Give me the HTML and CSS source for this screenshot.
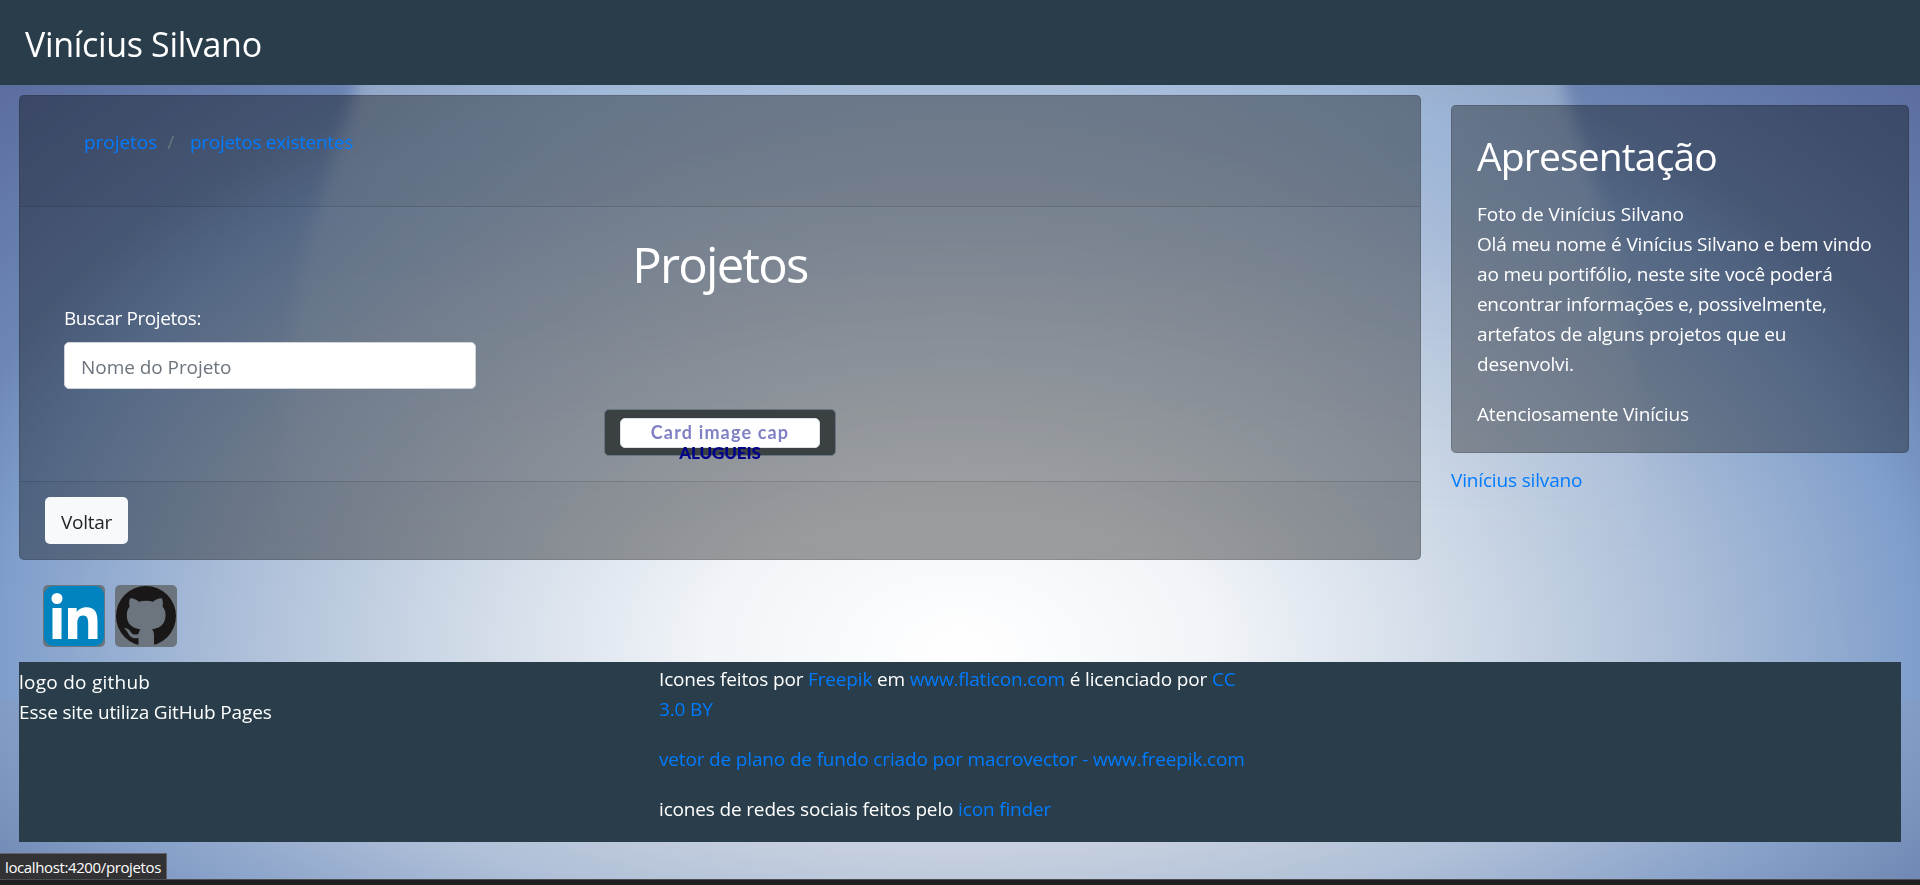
FILE: index.html
```html
<!DOCTYPE html>
<html lang="pt-BR">
<head>
<meta charset="utf-8">
<title>Vinícius Silvano</title>
<link rel="stylesheet" href="styles.css">
</head>
<body>
<svg class="backdrop" viewBox="0 0 1920 885" preserveAspectRatio="none" aria-hidden="true">
  <defs>
    <linearGradient id="beam" x1="0" y1="80" x2="0" y2="560" gradientUnits="userSpaceOnUse">
      <stop offset="0" stop-color="#dfe8f0" stop-opacity=".36"/>
      <stop offset=".35" stop-color="#dfe8f0" stop-opacity=".17"/>
      <stop offset="1" stop-color="#dfe8f0" stop-opacity="0"/>
    </linearGradient>
    <filter id="soft" x="-10%" y="-10%" width="120%" height="120%"><feGaussianBlur stdDeviation="8"/></filter>
  </defs>
  <path d="M368 40C345 150 296 220 284 400L270 600H1650L1636 400C1624 220 1575 150 1552 40Z" fill="url(#beam)" filter="url(#soft)"/>
</svg>
<header class="topbar"><a class="brand">Vinícius Silvano</a></header>
<div class="columns">
  <main class="card panel">
    <div class="card-header">
      <nav class="breadcrumb"><a>projetos</a><span class="slash">/</span><a class="current">projetos existentes</a></nav>
    </div>
    <div class="card-body">
      <h1>Projetos</h1>
      <div class="search">
        <label for="q">Buscar Projetos:</label>
        <input id="q" type="text" placeholder="Nome do Projeto">
      </div>
      <div class="project">
        <div class="thumb">Card image cap</div>
        <div class="project-name">ALUGUEIS</div>
      </div>
    </div>
    <div class="card-footer"><button class="back">Voltar</button></div>
  </main>
  <aside>
    <section class="card intro">
      <h2>Apresentação</h2>
      <p><span class="loose">Foto de Vinícius Silvano</span><br>Olá meu nome é Vinícius Silvano e bem vindo<br>ao meu portifólio, neste site você poderá<br><span class="snug">encontrar informações e, possivelmente,</span><br>artefatos de alguns projetos que eu<br>desenvolvi.</p>
      <p>Atenciosamente Vinícius</p>
    </section>
    <a class="author">Vinícius silvano</a>
  </aside>
</div>
<div class="social">
  <a class="badge"><svg viewBox="0 0 60 60"><rect width="60" height="60" rx="9" fill="#0083be"/><circle cx="13" cy="12.500" r="5.500" fill="#fff"/><path d="M8.500 22h9v31h-9zM24 22h8.700v4.300c1.500-2.800 5-5.100 9.700-5.100 8.600 0 11.100 5.500 11.100 14V53h-9.300V37.500c0-4.700-1-8-5-8-4.500 0-5.900 3.300-5.900 8V53H24z" fill="#fff"/></svg></a>
  <a class="badge"><svg viewBox="0 0 60 60"><circle cx="30" cy="30" r="30" fill="#191717"/><path fill="#6c757d" d="M14 12.500c2.500-.6 6 1 9 3.200 4.500-1.200 9.500-1.200 14 0 3-2.200 6.500-3.800 9-3.200 1.200 3 1 6 .5 8 2 2.400 3 5 3 8.500 0 10-6 13.200-13.500 14.200 1.500 1.500 2 3.500 2 6V60H22.500V52c-6 1-8.700-1-10.500-5-.9-2-2-3-4-4.500 3-.7 5 1 6.500 3.200 2 3 4.500 3.300 8 2.200.3-2 1-3.500 2-4.500C16.500 42.200 10.800 38.500 10.800 29c0-3.500 1-6.100 2.900-8.500-.7-2-.8-5 .3-8z"/></svg></a>
</div>
<footer class="credits">
  <div class="hosting"><span class="wide">logo do github</span><br>Esse site utiliza GitHub Pages</div>
  <div class="licenses">
    <p>Icones feitos por <a>Freepik</a> em <a>www.flaticon.com</a> é licenciado por <a>CC<br>3.0 BY</a></p>
    <p><a>vetor de plano de fundo criado por macrovector - www.freepik.com</a></p>
    <p>icones de redes sociais feitos pelo <a>icon finder</a></p>
  </div>
</footer>
<div class="status">localhost:4200/projetos</div>
<div class="edge"></div>
</body>
</html>
```

FILE: styles.css
```css
* { box-sizing: border-box; }
html, body { height: 100%; }
body {
  margin: 0;
  overflow: hidden;
  font: 19px/30px "Open Sans", "Noto Sans", sans-serif;
  letter-spacing: -.16px;
  color: #fff;
  background:
    radial-gradient(ellipse 980px 620px at 50% 650px, #fff 0, #f1f4f8 26%, #cdd8e6 53%, #a9bcd7 76%, #7f9ecb 98%, #6c86b3 108%, #5b6d9e 134%) 0 0 / 100% 700px no-repeat,
    radial-gradient(ellipse 960px 400px at 50% -50px, #fff 0, #c4cede 52%, #b0c0d8 71%, #859fc8 98%, #6f89b4 115%) 0 700px / 100% 185px no-repeat;
}
.backdrop { position: fixed; inset: 0; width: 100%; height: 100%; z-index: -1; }
a { color: #007bff; }
h1, h2, p { margin: 0; font-weight: 400; }

.topbar { height: 85px; padding: 19px 25px; background: #293e4a; }
.brand { color: #fff; font-size: 34px; line-height: 50px; letter-spacing: -.33px; }

.columns { display: flex; gap: 30px; padding: 10px 11px 0 19px; height: 490px; align-items: flex-start; }
.card { background: rgba(0,0,0,.35); border: 1px solid rgba(0,0,0,.14); border-radius: 5px; }
.panel { width: 1402px; height: 465px; display: flex; flex-direction: column; }
.card-header { height: 111px; padding: 31px 64px; background: rgba(0,0,0,.03); border-bottom: 1px solid rgba(0,0,0,.125); }
.breadcrumb { display: flex; }
.breadcrumb a:first-child { letter-spacing: -.05px; }
.slash { color: #6c757d; margin: 0 16px 0 10px; }
.breadcrumb .current { letter-spacing: -.29px; }
.card-body { flex: 1; padding: 27px 25px 23px; display: flex; flex-direction: column; }
h1 { text-align: center; font-size: 49px; line-height: 60px; letter-spacing: -1.7px; }
.search { display: flex; flex-direction: column; gap: 9px; width: 412px; margin: 9px 0 0 19px; }
label { letter-spacing: -.42px; }
input { height: 47px; padding: 2px 16px 0; border: 1px solid #ced4da; border-radius: 5px; background: #fff; font: inherit; letter-spacing: -.05px; }
input::placeholder { color: #6c757d; opacity: 1; }
.project { align-self: center; width: 232px; height: 47px; margin-top: 20px; padding: 8px 15px; background: #3b4043; border: 1px solid #697681; border-radius: 5px; text-align: center; font-family: Lato, sans-serif; font-weight: 700; color: #00008b; }
.thumb { height: 30px; line-height: 27px; background: #fff; border: 1px solid #dee2e6; border-radius: 5px; font-size: 18px; letter-spacing: 1.15px; color: #8080c5; }
.project-name { font-size: 17px; line-height: 10px; letter-spacing: -.1px; font-weight: 900; }
.card-footer { height: 78px; padding: 15px 25px; background: rgba(0,0,0,.03); border-top: 1px solid rgba(0,0,0,.125); }
.back { display: block; width: 83px; height: 47px; padding: 2px 0 0; border: 0; border-radius: 5px; background: #f8f9fa; color: #212529; font: inherit; letter-spacing: -.3px; }

aside { width: 458px; padding-top: 10px; }
.intro { height: 348px; padding: 26px 25px 23px; display: flex; flex-direction: column; gap: 19px; }
.intro p + p { margin-top: 1px; }
h2 { font-size: 39px; line-height: 48px; letter-spacing: -.85px; }
.loose { letter-spacing: 0; }
.snug { letter-spacing: -.3px; }
.author { display: block; margin-top: 12px; }

.social { display: flex; gap: 10px; padding: 10px 43px 15px; }
.badge { width: 62px; height: 62px; padding: 1px; border-radius: 5px; background: #6c757d; }
.badge svg { display: block; width: 60px; height: 60px; }

.credits { display: flex; height: 180px; margin: 0 19px; background: #293e4a; }
.hosting { width: 640px; padding-top: 5px; }
.wide { letter-spacing: .25px; }
.licenses { display: flex; flex-direction: column; gap: 20px; padding-top: 2px; white-space: nowrap; }

.status { position: fixed; left: 0; bottom: 6px; width: 167px; height: 26px; padding-left: 5px; background: #323234; border: solid #606265; border-width: 1px 1px 0 0; font-size: 15px; line-height: 26px; letter-spacing: -.38px; }
.edge { position: fixed; left: 0; right: 0; bottom: 0; height: 6px; background: #1f1f1f; border-top: 1px solid #4b4f50; }
```
